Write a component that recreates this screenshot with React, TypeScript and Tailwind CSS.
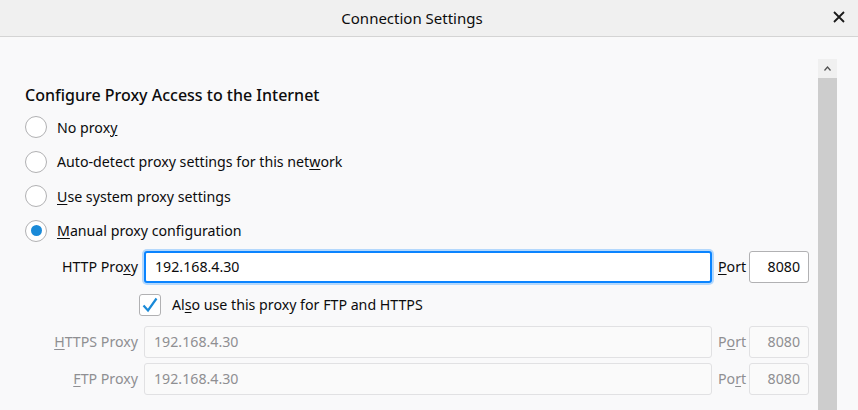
import React from 'react';

const FONT = { fontFamily: '"Noto Sans", "Open Sans", Arial, sans-serif' };

function U({ children }: { children: React.ReactNode }) {
  return <span className="underline underline-offset-2 decoration-1">{children}</span>;
}

function Radio({ checked, children }: { checked?: boolean; children: React.ReactNode }) {
  return (
    <div className="flex items-center h-[34.5px]">
      <div className="w-[22px] h-[22px] rounded-full border border-[#b1b1b3] bg-white flex items-center justify-center shrink-0">
        {checked && <div className="w-[11px] h-[11px] rounded-full bg-[#1a8ad8]" />}
      </div>
      <span className="ml-[10px] text-[14.2px] text-[#0c0c0d]">{children}</span>
    </div>
  );
}

function ProxyRow({
  label,
  value,
  port,
  portLabel,
  focused,
  disabled,
}: {
  label: React.ReactNode;
  value: string;
  port: string;
  portLabel: React.ReactNode;
  focused?: boolean;
  disabled?: boolean;
}) {
  const textColor = disabled ? 'text-[#8f8f92]' : 'text-[#0c0c0d]';
  return (
    <div className="flex items-center h-[32px]">
      <div className={`w-[113px] text-right text-[14.2px] ${textColor}`}>{label}</div>
      <div
        className={`ml-[6px] w-[568px] h-[32px] rounded-[3px] flex items-center px-[9px] text-[14.2px] ${
          focused
            ? 'border-2 border-[#0a84ff] bg-white shadow-[0_0_0_2px_#b4d8fc] text-[#0c0c0d]'
            : 'border border-[#e1e1e3] bg-[#fafafa] text-[#8f8f92]'
        }`}
      >
        {value}
      </div>
      <div className={`ml-[6px] w-[31px] text-[14.2px] ${textColor}`}>{portLabel}</div>
      <div
        className={`w-[60px] h-[32px] rounded-[3px] flex items-center justify-end pr-[8px] text-[14.2px] ${
          disabled
            ? 'border border-[#e1e1e3] bg-[#fafafa] text-[#8f8f92]'
            : 'border border-[#b1b1b3] bg-white text-[#0c0c0d]'
        }`}
      >
        {port}
      </div>
    </div>
  );
}

export default function App() {
  return (
    <div className="w-[858px] h-[410px] bg-[#f9f9fa] overflow-hidden flex flex-col" style={FONT}>
      <div className="h-[37px] shrink-0 bg-[#f0f0f0] border-b border-[#d4d4d4] flex items-center relative">
        <div className="flex-1 text-center pr-[34px] text-[15px] text-[#0c0c0d]">Connection Settings</div>
        <svg
          className="absolute right-[13px] top-[11px]"
          width="12"
          height="12"
          viewBox="0 0 12 12"
          fill="none"
          stroke="#1a1a1a"
          strokeWidth="1.8"
        >
          <path d="M1 1L11 11M11 1L1 11" />
        </svg>
      </div>

      <div className="flex flex-1 min-h-0">
        <div className="flex-1 pl-[25px] pt-[46px]">
          <div className="text-[16px] font-medium text-[#0c0c0d] leading-[24px]">
            Configure Proxy Access to the Internet
          </div>
          <div className="mt-[3px]">
            <Radio>
              No prox<U>y</U>
            </Radio>
            <Radio>
              Auto-detect proxy settings for this net<U>w</U>ork
            </Radio>
            <Radio>
              <U>U</U>se system proxy settings
            </Radio>
            <Radio checked>
              <U>M</U>anual proxy configuration
            </Radio>
          </div>

          <div className="mt-[3px]">
            <ProxyRow
              focused
              label={
                <>
                  HTTP Pro<U>x</U>y
                </>
              }
              value="192.168.4.30"
              portLabel={
                <>
                  <U>P</U>ort
                </>
              }
              port="8080"
            />
            <div className="flex items-center h-[23px] mt-[10px] ml-[114px]">
              <div className="w-[22px] h-[22px] rounded-[3px] border border-[#b1b1b3] bg-white flex items-center justify-center">
                <svg width="16" height="16" viewBox="0 0 16 16" fill="none" stroke="#1a8ad8" strokeWidth="2.2">
                  <path d="M1.5 8.5L6 13.5L14.5 1.5" />
                </svg>
              </div>
              <span className="ml-[11px] text-[14.2px] text-[#0c0c0d]">
                Al<U>s</U>o use this proxy for FTP and HTTPS
              </span>
            </div>
            <div className="mt-[10px]">
              <ProxyRow
                disabled
                label={
                  <>
                    <U>H</U>TTPS Proxy
                  </>
                }
                value="192.168.4.30"
                portLabel={
                  <>
                    P<U>o</U>rt
                  </>
                }
                port="8080"
              />
            </div>
            <div className="mt-[5px]">
              <ProxyRow
                disabled
                label={
                  <>
                    <U>F</U>TP Proxy
                  </>
                }
                value="192.168.4.30"
                portLabel={
                  <>
                    Po<U>r</U>t
                  </>
                }
                port="8080"
              />
            </div>
          </div>
        </div>

        <div className="w-[19px] mr-[21px] shrink-0 flex flex-col pt-[22px]">
          <div className="w-[19px] h-[19px] bg-[#f0f0f0] flex items-center justify-center">
            <svg width="7" height="5" viewBox="0 0 7 5" fill="none" stroke="#505050" strokeWidth="1.2">
              <path d="M0.5 4.5L3.5 1L6.5 4.5" />
            </svg>
          </div>
          <div className="w-[19px] flex-1 bg-[#cdcdcd]" />
        </div>
      </div>
    </div>
  );
}
